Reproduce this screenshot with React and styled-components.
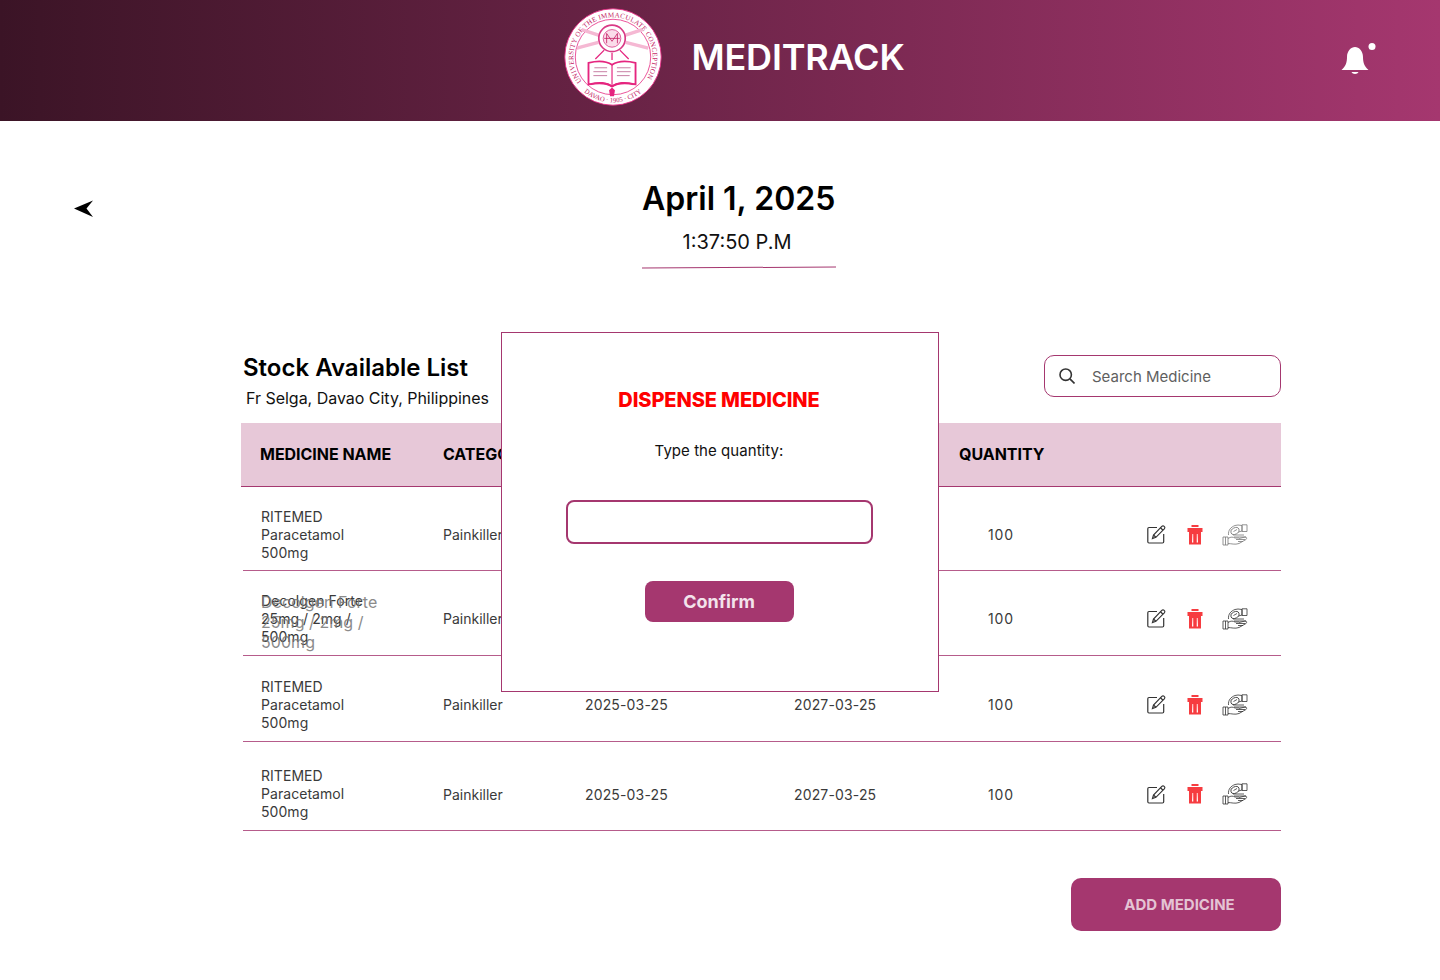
import React from 'react'
import styled, { createGlobalStyle } from 'styled-components'

const rows = [
  { name: ['RITEMED', 'Paracetamol', '500mg'], height: 84, top: 12, faded: true },
  { name: ['Decolgen Forte', '25mg / 2mg /', '500mg'], height: 85, top: 11, ghost: true },
  { name: ['RITEMED', 'Paracetamol', '500mg'], height: 86, top: 12 },
  { name: ['RITEMED', 'Paracetamol', '500mg'], height: 89, top: 16 },
]

const App = () => {
  return (
    <Page>
      <GlobalStyle />
      <Header>
        <Logo />
        <Title>MEDITRACK</Title>
        <Bell />
      </Header>

      <Main>
        <BackArrow viewBox="0 0 20 18">
          <path d="M0 8.500 L19 0.500 L12.500 8.500 L19 17 Z" fill="#000" />
        </BackArrow>

        <DateBlock>
          <DateText>April 1, 2025</DateText>
          <TimeText>1:37:50 P.M</TimeText>
          <DateRule />
        </DateBlock>

        <ListHead>
          <div>
            <ListTitle>Stock Available List</ListTitle>
            <ListPlace>Fr Selga, Davao City, Philippines</ListPlace>
          </div>
          <SearchBox>
            <SearchIcon />
            <span>Search Medicine</span>
          </SearchBox>
        </ListHead>

        <TableHead>
          <span>MEDICINE NAME</span>
          <span>CATEGORY</span>
          <span>DATE ADDED</span>
          <span>EXPIRY DATE</span>
          <span>QUANTITY</span>
        </TableHead>

        {rows.map((row, i) => (
          <Row key={i} $height={row.height} $top={row.top}>
            <NameCell>
              {row.name.map((line) => <div key={line}>{line}</div>)}
              {row.ghost && (
                <Ghost>
                  {row.name.map((line) => <div key={line}>{line}</div>)}
                </Ghost>
              )}
            </NameCell>
            <div>Painkiller</div>
            <DateCell>2025-03-25</DateCell>
            <DateCell>2027-03-25</DateCell>
            <Qty>100</Qty>
            <Actions>
              <EditIcon />
              <Trash />
              <Hands $faded={row.faded} />
            </Actions>
          </Row>
        ))}

        <Footer>
          <AddButton>ADD MEDICINE</AddButton>
        </Footer>
      </Main>

      <Modal>
        <ModalTitle>DISPENSE MEDICINE</ModalTitle>
        <ModalLabel>Type the quantity:</ModalLabel>
        <QuantityInput />
        <ConfirmButton>Confirm</ConfirmButton>
      </Modal>
    </Page>
  )
}

export default App

const Logo = () => (
  <LogoSvg viewBox="0 0 100 100">
    <defs>
      <path id="logoTop" d="M18.100 74.900 A40.500 40.500 0 1 1 84.700 70.900" />
      <path id="logoBottom" d="M14 79 A46 46 0 0 0 86 79" />
    </defs>
    <circle cx="50" cy="50" r="49.200" fill="#fff" stroke="#e5257f" strokeWidth="0.900" />
    <circle cx="50" cy="50" r="38.500" fill="#fff" stroke="#e5257f" strokeWidth="0.800" />
    <text fontFamily="Liberation Serif, serif" fontSize="7.200" fill="#c2185f">
      <textPath href="#logoTop" textLength="176">UNIVERSITY OF THE IMMACULATE CONCEPTION</textPath>
    </text>
    <text fontFamily="Liberation Serif, serif" fontSize="6.800" fill="#c2185f">
      <textPath href="#logoBottom" startOffset="50%" textAnchor="middle">DAVAO · 1905 · CITY</textPath>
    </text>
    <g stroke="#f5b8d3" strokeWidth="3.400">
      <path d="M36 28 L18 22 M35 35 L13 41 M62 28 L80 22 M63 35 L86 41" />
    </g>
    <g stroke="#e5257f" strokeWidth="1.300">
      <path d="M41 43 L32 52 M57 43 L66 52 M49 46 V53" />
    </g>
    <circle cx="49" cy="31" r="13.500" fill="#fff" stroke="#d93a86" strokeWidth="1.700" />
    <circle cx="49" cy="31" r="9" fill="#fbdcea" stroke="#d93a86" strokeWidth="0.800" />
    <path d="M43.500 36 L43.500 26 L49 34 L54.500 26 L54.500 36 M41 31 H57" fill="none" stroke="#c2185f" strokeWidth="0.800" />
    <path d="M25 56 C33 54 43 54 49 58 C55 54 65 54 73 56 L73 78 C63 76 55 76 49 80 C43 76 35 76 25 78 Z" fill="#fff" stroke="#e5257f" strokeWidth="1.900" />
    <path d="M27 78 C35 75 44 76 49 80 C54 76 63 75 71 78" fill="none" stroke="#e5257f" strokeWidth="1.500" />
    <path d="M49 58 V80" stroke="#e5257f" strokeWidth="1.200" />
    <path d="M31 61 H44 M30 65 H44 M30 69 H44 M54 61 H68 M54 65 H68 M54 69 H67" stroke="#c77da3" strokeWidth="1" />
    <path d="M46 84 L49 81 L52 84 L51 90 H47 Z" fill="#e5257f" />
  </LogoSvg>
)

const Bell = () => (
  <BellSvg viewBox="0 0 36 32">
    <path d="M0.500 27 C5 23 6 19 6 14 C6 8 10 4 14 4 C18 4 22 8 22 14 C22 19 23 23 27.500 27 Z" fill="#fff" />
    <path d="M10.500 29 H17.500 C16.500 31.500 11.500 31.500 10.500 29 Z" fill="#fff" />
    <circle cx="31" cy="3.500" r="3.500" fill="#fff" />
  </BellSvg>
)

const SearchIcon = () => (
  <svg width="16" height="16" viewBox="0 0 16 16" fill="none" stroke="#333" strokeWidth="1.600">
    <circle cx="6.700" cy="6.700" r="5.700" />
    <path d="M10.900 10.900 L15.500 15.500" />
  </svg>
)

const EditIcon = () => (
  <svg width="19" height="19" viewBox="0 0 19 19" fill="none" stroke="#333" strokeWidth="1.200">
    <path d="M10 2.500 H2 C1.200 2.500 0.800 3 0.800 3.700 V16.800 C0.800 17.500 1.200 18 2 18 H15.500 C16.200 18 16.700 17.500 16.700 16.800 V9" />
    <path d="M5.500 13.500 L6.500 10 L14.800 1.400 C15.500 0.700 16.500 0.700 17.200 1.400 C18 2.100 18 3 17.300 3.800 L8.900 12.300 Z" />
    <path d="M13.500 2.800 L16 5.200 M6.500 10 L8.900 12.300" />
  </svg>
)

const Trash = () => (
  <svg width="16" height="20" viewBox="0 0 16 20">
    <defs>
      <linearGradient id="trashSlit" x1="0" y1="0" x2="0" y2="1">
        <stop offset="0" stopColor="#ffb5b5" />
        <stop offset="1" stopColor="#fff" />
      </linearGradient>
    </defs>
    <path d="M4.500 0 H11.500 V2 H4.500 Z M0.500 3 H15.500 V7 H0.500 Z" fill="#f63c40" />
    <path d="M2 7 H14 V19.500 H2 Z" fill="#f63c40" />
    <path d="M5 9 H6.300 V17.500 H5 Z M9.700 9 H11 V17.500 H9.700 Z" fill="url(#trashSlit)" />
  </svg>
)

const Hands = ({ $faded }) => (
  <HandsSvg viewBox="0 0 26 22" $faded={$faded} fill="none">
    <ellipse cx="13" cy="7" rx="4.400" ry="3.200" transform="rotate(-25 13 7)" />
    <path d="M11.500 7.500 L15 5.500 M6.500 11 C6 6 9 3 13 1.500 L16 1 L20 1.500 V7 L16.500 8" />
    <path d="M20 0.800 H25 V7.500 H20 Z" />
    <path d="M1 13 H6 V21 H1 Z M3.500 13 V21" />
    <path d="M6 14.500 C9 12.500 11 13 13 14 H17 M6 19.500 C9 19.500 13 21 17 19.500 L24 15.500 C25 14.500 25 13 23 13 L17 14.500" />
    <path d="M11 11 H22 M12 13 H24 M14 15.500 H23 M16 17.500 H21" />
  </HandsSvg>
)

const GlobalStyle = createGlobalStyle`
  html, body {
    margin: 0;
    background: #fff;
  }
  body {
    font-family: Inter, "Liberation Sans", sans-serif;
    color: #000;
  }
`

const Page = styled.div`
  position: relative;
  width: 1440px;
  height: 980px;
  overflow: hidden;
  background: #fff;
`

const Header = styled.header`
  position: relative;
  height: 121px;
  display: flex;
  align-items: center;
  justify-content: center;
  gap: 29px;
  padding: 0 0 7px 29px;
  box-sizing: border-box;
  background: linear-gradient(90deg, #3b1426 0%, #a5376f 100%);
`

const LogoSvg = styled.svg`
  width: 98px;
  height: 98px;
`

const Title = styled.h1`
  margin: 0;
  font-size: 36px;
  line-height: 44px;
  font-weight: 600;
  color: #fff;
  letter-spacing: -0.2px;
`

const BellSvg = styled.svg`
  position: absolute;
  left: 1341px;
  top: 43px;
  width: 36px;
  height: 32px;
`

const Main = styled.main`
  position: relative;
  width: 1040px;
  margin-left: 241px;
`

const BackArrow = styled.svg`
  position: absolute;
  left: -167px;
  top: 78px;
  width: 20px;
  height: 18px;
  margin-top: -56px;
`

const DateBlock = styled.div`
  width: 194px;
  margin: 57px auto 0 401px;
  text-align: center;
`

const DateText = styled.div`
  padding-right: 2px;
  font-size: 32px;
  line-height: 42px;
  font-weight: 600;
  white-space: nowrap;
`

const TimeText = styled.div`
  margin: 10px 0 0 -4px;
  font-size: 20px;
  line-height: 24px;
  color: #111;
`

const DateRule = styled.div`
  height: 1px;
  margin-top: 13px;
  background: #a5376f;
  transform: rotate(-0.3deg);
`

const ListHead = styled.div`
  display: flex;
  justify-content: space-between;
  align-items: flex-start;
  margin-top: 84px;
  height: 71px;
`

const ListTitle = styled.div`
  padding-left: 2px;
  font-size: 24px;
  line-height: 32px;
  font-weight: 600;
`

const ListPlace = styled.div`
  margin-top: 4px;
  padding-left: 5px;
  font-size: 16px;
  line-height: 20px;
  letter-spacing: -0.02px;
  color: #111;
`

const SearchBox = styled.div`
  display: flex;
  align-items: center;
  gap: 17px;
  box-sizing: border-box;
  width: 237px;
  height: 42px;
  margin-top: 3px;
  padding-left: 14px;
  border: 1px solid #a5376f;
  border-radius: 10px;
  font-size: 15px;
  color: #5f5f5f;
`

const TableHead = styled.div`
  display: grid;
  grid-template-columns: 183px 142px 209px 165px 1fr 160px;
  align-items: center;
  box-sizing: border-box;
  height: 64px;
  padding: 0 0 2px 19px;
  background: #e7c8d8;
  border-bottom: 1px solid #a5376f;
  font-size: 16px;
  font-weight: 700;
  letter-spacing: -0.03px;

  span { white-space: nowrap; }
`

const Row = styled.div`
  display: grid;
  grid-template-columns: 182px 142px 209px 194px 158px 1fr;
  align-items: center;
  box-sizing: border-box;
  height: ${(p) => p.$height}px;
  margin-left: 2px;
  padding: ${(p) => p.$top}px 0 0 18px;
  border-bottom: 1px solid #b65c8b;
  font-size: 14px;
  color: #3a3a3a;
`

const NameCell = styled.div`
  position: relative;
  line-height: 18px;
  letter-spacing: 0.05px;
`

const Ghost = styled.div`
  position: absolute;
  left: 0;
  top: 0;
  font-size: 16px;
  line-height: 20px;
  color: #777;
  opacity: 0.85;
`

const DateCell = styled.div`
  letter-spacing: 0.15px;
`

const Qty = styled.div`
  letter-spacing: 0.8px;
`

const Actions = styled.div`
  display: flex;
  align-items: center;
  gap: 21px;
  padding-left: 1px;
`

const HandsSvg = styled.svg`
  width: 26px;
  height: 22px;
  margin-left: -2px;
  stroke: #333;
  stroke-width: 0.8;
  opacity: ${(p) => (p.$faded ? 0.65 : 1)};
`

const Footer = styled.div`
  display: flex;
  justify-content: flex-end;
  margin-top: 47px;
`

const AddButton = styled.button`
  box-sizing: border-box;
  width: 210px;
  height: 53px;
  padding-left: 13px;
  border: none;
  border-radius: 10px;
  background: #a5376f;
  color: #e4c4d4;
  font: 700 15px Inter, sans-serif;
`

const Modal = styled.div`
  position: absolute;
  left: 501px;
  top: 332px;
  box-sizing: border-box;
  width: 438px;
  height: 360px;
  display: flex;
  flex-direction: column;
  align-items: center;
  padding-right: 2px;
  background: #fff;
  border: 1px solid #a5376f;
`

const ModalTitle = styled.div`
  margin-top: 55px;
  font-size: 20px;
  line-height: 24px;
  font-weight: 800;
  letter-spacing: -0.1px;
  color: #f00;
`

const ModalLabel = styled.div`
  margin-top: 29px;
  font-size: 15px;
  line-height: 20px;
  letter-spacing: 0.05px;
  color: #111;
`

const QuantityInput = styled.input`
  box-sizing: border-box;
  width: 307px;
  height: 44px;
  margin-top: 39px;
  border: 2px solid #a5376f;
  border-radius: 8px;
  outline: none;
`

const ConfirmButton = styled.button`
  width: 149px;
  height: 41px;
  margin-top: 37px;
  border: none;
  border-radius: 8px;
  background: #a5376f;
  color: #f3e3eb;
  font: 700 18px Inter, sans-serif;
`
